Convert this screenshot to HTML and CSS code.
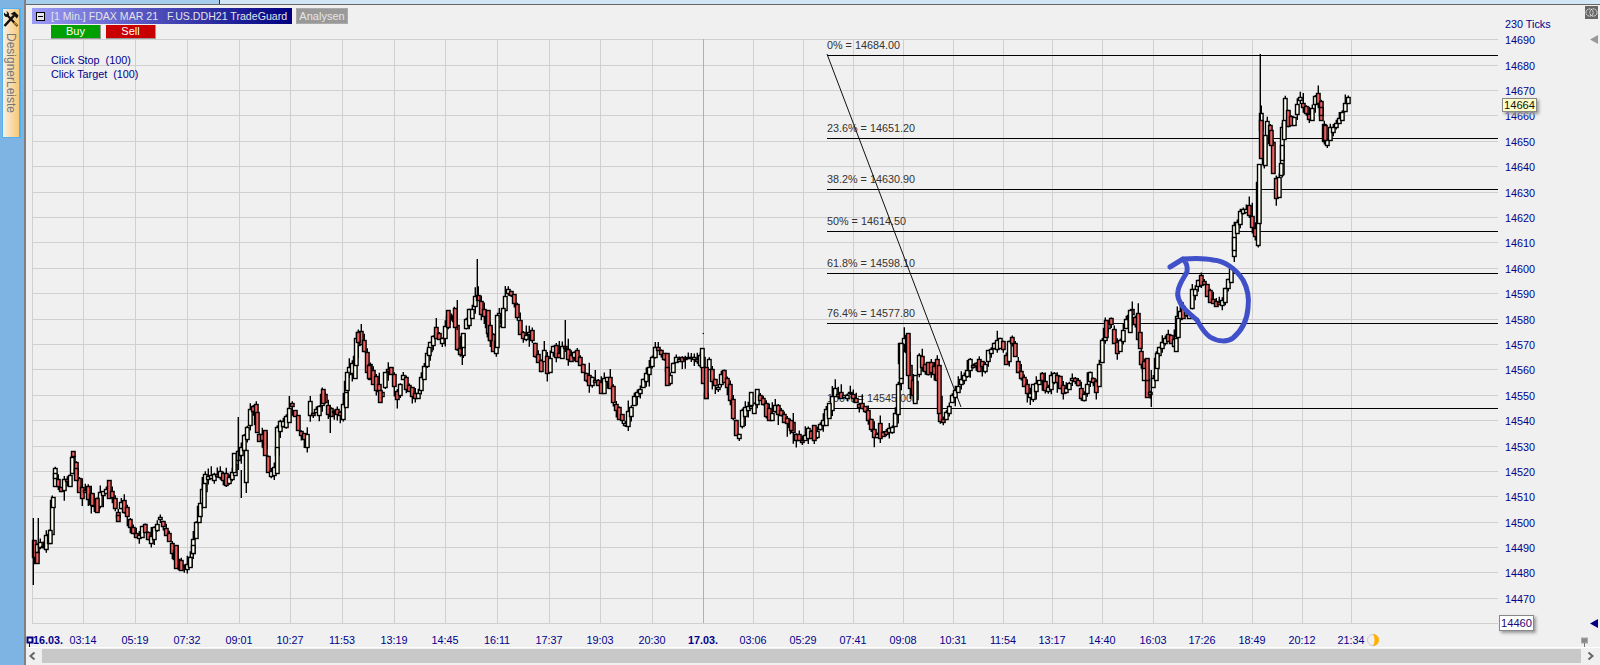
FILE: index.html
```html
<!DOCTYPE html>
<html lang="en">
<head>
    <meta charset="UTF-8">
    <title>FDAX MAR 21 - TradeGuard</title>
    <link rel="stylesheet" href="styles.css">
</head>
<body>
    <aside class="dock">
        <div class="designer-tab">
            <svg class="tools-icon" viewBox="0 0 16 16" width="16" height="16">
                <path d="M1.5 15L11 4.5" stroke="#111" stroke-width="2.6" fill="none"/>
                <path d="M7.5 3L11.5 .5L15.5 4.5L14 7.5L10.5 4Z" fill="#111"/>
                <path d="M14.5 15L5 5" stroke="#111" stroke-width="2.2" fill="none"/>
                <path d="M1 1.5L3 3.5L4.5 2L3 .5C5 .2 6.5 2 6 4.5L4.5 6C2 6.5 .5 4 1 1.5Z" fill="#111"/>
                <path d="M10.5 12L12 10.5L15 14L14 15Z" fill="#c98a2c"/>
            </svg>
            <span class="designer-label">DesignerLeiste</span>
        </div>
    </aside>

    <main class="workspace">
        <div class="top-strip"></div>

        <section class="pane">
            <svg class="chart" id="chart" viewBox="26 5 1574 642" width="1574" height="642"></svg>

            <div class="pane-head">
                <div class="title-bar">
                    <span class="collapse-box"></span>
                    <span class="title-text">[1 Min.] FDAX MAR 21   F.US.DDH21 TradeGuard</span>
                </div>
                <button class="analysis-button">Analysen</button>
            </div>
            <div class="order-row">
                <button class="order-button buy">Buy</button>
                <button class="order-button sell">Sell</button>
            </div>

            <div class="price-tag last">14664</div>
            <div class="price-tag low">14460</div>

            <svg class="rings-icon" viewBox="0 0 13 13" width="13" height="13">
                <rect width="13" height="13" fill="#666"/>
                <circle cx="4.6" cy="6.5" r="3.6" fill="none" stroke="#fff" stroke-width="1" stroke-dasharray="1.4 .6"/>
                <circle cx="8.4" cy="6.5" r="3.6" fill="none" stroke="#fff" stroke-width="1" stroke-dasharray="1.4 .6"/>
            </svg>
        </section>

        <div class="scroll-bar">
            <svg class="scroll-arrow" viewBox="0 0 16 14" width="16" height="14">
                <path d="M8.5 3.5L4.5 7L8.5 10.5" fill="none" stroke="#666" stroke-width="2"/>
            </svg>
            <span class="scroll-thumb"></span>
            <svg class="scroll-arrow" viewBox="0 0 19 14" width="19" height="14">
                <path d="M7.5 3.5L11.5 7L7.5 10.5" fill="none" stroke="#666" stroke-width="2"/>
            </svg>
        </div>
    </main>

    <script src="chart.js"></script>
</body>
</html>
```

FILE: styles.css
```css
html, body {
    margin: 0;
    padding: 0;
    width: 1600px;
    height: 665px;
    overflow: hidden;
}

body {
    display: flex;
    background: #7db4e3;
    font-family: "Liberation Sans", Arial, sans-serif;
    font-size: 11px;
}

.dock {
    width: 24px;
    flex: none;
    padding: 8px 0 0 2px;
    box-sizing: border-box;
}

.designer-tab {
    width: 19px;
    height: 130px;
    box-sizing: border-box;
    border: 1px solid #4fb0f2;
    border-right-width: 2px;
    background: linear-gradient(to right, #f6f0e8, #fac872);
    display: flex;
    flex-direction: column;
    align-items: center;
}

.tools-icon {
    margin-top: 2px;
    flex: none;
}

.designer-label {
    writing-mode: vertical-rl;
    font-size: 12px;
    color: #777;
    margin-top: 6px;
}

.workspace {
    flex: 1;
    display: flex;
    flex-direction: column;
    border-left: 2px solid #808080;
    min-width: 0;
}

.top-strip {
    height: 5px;
    box-sizing: border-box;
    flex: none;
    border-bottom: 1px solid #666;
    background: linear-gradient(to right, #a6cfee 0, #a6cfee 193px, #333 193px, #333 194px, #d2e6f6 194px);
}

.pane {
    position: relative;
    flex: 1;
    background: #f0f0f0;
    min-height: 0;
}

.chart {
    position: absolute;
    top: 0;
    left: 0;
}

.chart text {
    font-family: "Liberation Sans", Arial, sans-serif;
    font-size: 10.8px;
}

.pane-head {
    position: relative;
    display: flex;
    gap: 4px;
    padding: 3px 0 0 6px;
}

.title-bar {
    width: 260px;
    height: 16px;
    display: flex;
    align-items: center;
    background: linear-gradient(to right, #9c9cf6, #4a4ab8 50%, #000080);
    color: #e4e4e4;
    font-size: 10.6px;
}

.collapse-box {
    position: relative;
    width: 9px;
    height: 9px;
    margin: 0 6px 0 4px;
    flex: none;
    box-sizing: border-box;
    border: 1px solid #000;
    background: #e8e8e8;
}

.collapse-box::before {
    content: "";
    position: absolute;
    left: 1px;
    right: 1px;
    top: 3px;
    height: 1px;
    background: #000;
}

.title-text {
    white-space: pre;
}

.analysis-button {
    width: 52px;
    height: 16px;
    padding: 0;
    border: 1px solid #aaa;
    background: #999;
    color: #e6e6e6;
    font: 11px "Liberation Sans", Arial, sans-serif;
}

.order-row {
    position: relative;
    display: flex;
    gap: 5px;
    margin: 1px 0 0 25px;
}

.order-button {
    width: 50px;
    height: 14px;
    padding: 0;
    border: none;
    border-right: 1px solid #999;
    border-bottom: 1px solid #999;
    color: #fff;
    font: 11px/13px "Liberation Sans", Arial, sans-serif;
}

.buy {
    background: #00a000;
}

.sell {
    background: #c80000;
}

.price-tag {
    position: absolute;
    box-sizing: border-box;
    width: 35px;
    border: 1px solid #888;
    box-shadow: 2px 2px 3px #999;
    text-align: center;
    font-size: 11.2px;
    line-height: 12px;
}

.price-tag.last {
    left: 1476px;
    top: 93px;
    height: 14px;
    background: #ffffc8;
    color: #111;
}

.price-tag.low {
    left: 1473px;
    top: 610px;
    height: 16px;
    line-height: 14px;
    background: #fff;
    color: #1c0a78;
}

.rings-icon {
    position: absolute;
    top: 1px;
    left: 1559px;
}

.scroll-bar {
    height: 18px;
    flex: none;
    box-sizing: border-box;
    display: flex;
    align-items: center;
    border-top: 1px solid #fff;
    padding-bottom: 2px;
    background: #f0f0f0;
}

.scroll-arrow {
    flex: none;
}

.scroll-thumb {
    flex: 1;
    height: 14px;
    background: #c8c8c8;
}
```

FILE: chart.js
```js
const NS = 'http://www.w3.org/2000/svg';
const chart = document.getElementById('chart');

const GRID_LEFT = 32, GRID_RIGHT = 1498, GRID_TOP = 39, GRID_BOTTOM = 623;
const priceToY = p => 39.3 + (14690 - p) * 2.539;

function add(tag, attrs, text) {
    const el = document.createElementNS(NS, tag);
    for (const k in attrs) el.setAttribute(k, attrs[k]);
    if (text) el.textContent = text;
    chart.appendChild(el);
    return el;
}

// vertical grid lines and the label under each
const times = [
    [83, '03:14'], [135, '05:19'], [187, '07:32'], [239, '09:01'], [290, '10:27'], [342, '11:53'],
    [394, '13:19'], [445, '14:45'], [497, '16:11'], [549, '17:37'], [600, '19:03'], [652, '20:30'],
    [703, '17.03.'], [753, '03:06'], [803, '05:29'], [853, '07:41'], [903, '09:08'], [953, '10:31'],
    [1003, '11:54'], [1052, '13:17'], [1102, '14:40'], [1153, '16:03'], [1202, '17:26'], [1252, '18:49'],
    [1302, '20:12'], [1351, '21:34']
];

function line(x1, y1, x2, y2, color) {
    add('line', { x1, y1, x2, y2, stroke: color, 'stroke-width': 1, 'shape-rendering': 'crispEdges' });
}

function drawGrid() {
    for (let p = 14690; p >= 14460; p -= 10) {
        const y = Math.round(priceToY(p)) + 0.5;
        line(GRID_LEFT, y, GRID_RIGHT, y, '#d0d0d0');
        // the lowest price sits in its own tag
        if (p > 14460) add('text', { x: 1505, y: y + 4, fill: '#00008b' }, String(p));
    }
    line(GRID_LEFT + 0.5, GRID_TOP, GRID_LEFT + 0.5, GRID_BOTTOM, '#d0d0d0');
    times.forEach(([x, label]) => {
        const day = label.endsWith('.');
        line(x + 0.5, GRID_TOP, x + 0.5, GRID_BOTTOM, day ? '#b0b0b0' : '#d0d0d0');
        const t = add('text', { x, y: 644, fill: '#00008b', 'text-anchor': 'middle' }, label);
        if (day) t.setAttribute('font-weight', 'bold');
    });
    add('text', { x: 33, y: 644, fill: '#00008b', 'font-weight': 'bold' }, '16.03.');
    add('text', { x: 1505, y: 28, fill: '#00008b' }, '230 Ticks');
    add('text', { x: 51, y: 64, fill: '#00008b' }, 'Click Stop \u00a0(100)');
    add('text', { x: 51, y: 78, fill: '#00008b' }, 'Click Target \u00a0(100)');
}

// fibonacci retracement drawn by the user
function drawFib() {
    const levels = [
        ['0% = 14684.00', 14684], ['23.6% = 14651.20', 14651.2], ['38.2% = 14630.90', 14630.9],
        ['50% = 14614.50', 14614.5], ['61.8% = 14598.10', 14598.1], ['76.4% = 14577.80', 14578.1],
        ['100% = 14545.00', 14544.6]
    ];
    levels.forEach(([label, price]) => {
        const y = Math.round(priceToY(price)) + 0.5;
        line(827, y, GRID_RIGHT, y, '#000');
        add('text', { x: 827, y: y - 6.5, fill: '#333' }, label);
    });
    add('line', { x1: 827, y1: 54, x2: 961, y2: 407, stroke: '#111', 'stroke-width': 1 });
}

// price path read off the chart, x then y in page pixels
const path = [
    [33,540],[35,555],[38,545],[45,545],[50,537],[53,505],[55,477],[62,493],[65,480],[70,480],[73,458],[77,473],
    [80,490],[87,493],[92,500],[97,508],[102,493],[108,488],[113,497],[118,513],[122,502],[127,513],[132,527],
    [137,537],[145,528],[150,540],[155,530],[160,520],[165,528],[170,540],[176,560],[180,567],[185,568],[190,560],
    [195,537],[200,510],[205,482],[210,477],[220,475],[228,480],[233,475],[238,457],[242,447],[247,433],[252,407],
    [256,413],[258,437],[265,440],[267,460],[270,473],[275,470],[277,443],[280,427],[285,422],[292,407],[297,417],
    [299,430],[307,440],[310,410],[315,413],[320,407],[324,393],[329,412],[335,410],[342,417],[346,393],[348,373],
    [355,367],[357,340],[360,333],[365,347],[368,370],[377,383],[382,395],[387,370],[392,373],[398,397],[403,378],
    [413,392],[418,397],[423,375],[429,350],[435,333],[443,340],[448,320],[455,317],[458,345],[462,353],[465,327],
    [472,313],[476,296],[480,303],[487,320],[492,342],[497,347],[498,318],[502,320],[504,307],[508,290],[513,297],
    [517,310],[521,330],[525,338],[530,330],[533,340],[537,357],[542,368],[545,350],[548,373],[553,350],[560,355],
    [565,347],[572,360],[575,353],[582,365],[586,377],[590,383],[595,380],[602,390],[608,377],[612,390],[615,407],
    [620,413],[625,423],[630,413],[635,397],[642,387],[647,373],[652,363],[656,347],[662,353],[667,363],[669,383],
    [673,367],[678,358],[685,357],[690,358],[697,360],[702,357],[704,380],[706,395],[709,363],[713,380],[718,390],
    [723,373],[727,382],[732,400],[736,427],[739,437],[743,413],[750,405],[755,408],[758,393],[763,402],[768,413],
    [771,420],[775,407],[783,417],[792,427],[797,437],[802,442],[808,433],[815,437],[820,427],[829,413],[835,393],
    [843,397],[850,393],[858,403],[865,407],[870,420],[875,437],[880,432],[887,435],[893,427],[897,410],[900,377],
    [903,343],[907,343],[910,377],[915,397],[920,357],[925,367],[930,367],[937,370],[940,410],[943,420],[948,410],
    [952,400],[958,387],[965,375],[970,365],[978,363],[985,368],[990,350],[997,343],[1003,343],[1007,363],[1011,337],
    [1015,352],[1018,367],[1024,380],[1029,395],[1035,388],[1042,378],[1047,390],[1053,378],[1058,380],[1065,393],
    [1072,380],[1078,382],[1083,398],[1090,378],[1097,388],[1100,367],[1103,343],[1107,327],[1111,323],[1115,343],
    [1118,352],[1123,333],[1127,320],[1132,313],[1138,327],[1140,357],[1145,367],[1147,387],[1150,392],[1155,377],
    [1158,353],[1167,338],[1175,343],[1178,320],[1182,310],[1190,318],[1192,297],[1200,280],[1205,283],[1208,293],
    [1215,302],[1223,305],[1227,287],[1232,273],[1234,240],[1237,228],[1242,212],[1248,207],[1253,227],[1257,237],
    [1259,190],[1261,123],[1263,167],[1265,147],[1268,123],[1272,147],[1275,180],[1277,197],[1280,183],[1282,150],
    [1284,120],[1286,100],[1288,117],[1293,123],[1297,110],[1300,100],[1305,107],[1310,120],[1315,100],[1318,97],
    [1321,112],[1323,127],[1326,143],[1330,133],[1335,125],[1342,117],[1347,103],[1350,100]
];

function pathY(x) {
    for (let i = 1; i < path.length; i++) {
        if (x <= path[i][0]) {
            const [x0, y0] = path[i - 1], [x1, y1] = path[i];
            return y0 + (y1 - y0) * (x - x0) / (x1 - x0);
        }
    }
    return path[path.length - 1][1];
}

// small seeded generator so the picture is the same every time
let seed = 20210316;
function rnd() {
    seed = (seed * 1664525 + 1013904223) % 4294967296;
    return seed / 4294967296;
}

function candle(x, top, bottom, up) {
    add('rect', {
        x: Math.round(x) - 1.5, y: Math.round(top) + 0.5, width: 3.6, height: Math.max(1, Math.round(bottom - top)),
        fill: up ? '#fffff0' : '#f25f5f', stroke: '#000', 'stroke-width': 1.4
    });
}

function wick(x, y1, y2) {
    add('line', { x1: Math.round(x) + 0.3, y1, x2: Math.round(x) + 0.3, y2, stroke: '#000', 'stroke-width': 1.4 });
}

// bars that stand out in the chart: x, top, bottom, up
const bigBars = [
    [37,552,563,0],[50,530,543,1],[53,497,507,1],[55,473,478,1],[72,457,473,1],[73,451,456,0],[76,468,480,0],
    [92,493,505,0],[97,498,512,0],[118,515,521,0],[176,545,568,0],[181,560,570,0],[190,557,567,1],[193,545,553,1],
    [200,503,516,1],[204,483,507,1],[234,453,472,1],[246,450,482,1],[257,412,432,0],[265,430,455,0],[277,447,473,1],
    [323,389,403,0],[346,392,407,1],[347,372,390,1],[356,338,365,1],[358,332,342,0],[369,365,378,0],[380,390,402,0],
    [429,347,355,1],[448,310,327,0],[455,308,327,0],[463,333,347,1],[488,310,333,0],[490,325,340,0],[497,315,347,1],
    [503,308,327,1],[667,367,385,0],[702,348,367,1],[706,367,398,0],[751,392,405,1],[791,420,430,0],[814,425,440,0],
    [829,403,418,1],[900,343,363,0],[901,343,378,1],[908,333,375,0],[915,375,403,1],[939,365,413,0],[1106,320,337,0],
    [1130,310,332,1],[1140,332,348,0],[1144,368,380,1],[1147,358,380,0],[1157,353,368,1],[1176,338,351,1],[1178,318,337,1],
    [1234,237,250,1],[1259,164,223,1],[1261,120,158,0],[1265,135,165,1],[1271,130,145,0],[1281,163,175,1],[1282,145,160,1],
    [1284,120,139,1],[1321,107,115,0],[1325,125,140,0]
];

const bigWicks = [
    [33,518,585],[38,518,555],[238,417,470],[241,470,498],[246,470,493],[330,405,433],[457,300,330],[462,340,365],
    [476.5,259,300],[565,320,352],[703,333,334],[1151,370,407],[1260,54,125]
];

function drawCandles() {
    for (let x = 34; x <= 1350; x += 3) {
        const slope = pathY(x + 1.5) - pathY(x - 1.5);
        const mid = pathY(x) + (rnd() - 0.5) * 4;
        const height = Math.max(Math.abs(slope), 1 + rnd() * rnd() * 18);
        const up = Math.abs(slope) > 1 ? slope < 0 : rnd() < 0.5;
        wick(x, mid - height / 2 - rnd() * rnd() * 14, mid + height / 2 + rnd() * rnd() * 14);
        candle(x, mid - height / 2, mid + height / 2, up);
    }
    bigWicks.forEach(([x, y1, y2]) => wick(x, y1, y2));
    bigBars.forEach(([x, top, bottom, up]) => candle(x, top, bottom, up));
}

function drawInk() {
    add('path', {
        d: 'M1170 267L1183 259C1195 258 1205 258 1213 260C1225 261 1236 269 1243 280C1248 289 1249 300 1248 308' +
           'C1247 322 1240 332 1233 338C1228 342 1218 342 1210 337C1203 332 1200 325 1197 320C1191 315 1186 311 1183 307' +
           'C1178 300 1177 295 1178 291C1179 284 1183 279 1187 272C1188 266 1186 262 1183 259',
        fill: 'none', stroke: '#4050c8', 'stroke-width': 5, 'stroke-linecap': 'round', 'stroke-linejoin': 'round'
    });
}

// small markers round the edges of the chart
function drawMarkers() {
    add('path', { d: 'M1590 39.5L1598 35V44Z', fill: '#999' });
    add('path', { d: 'M1590 623.5L1598 619V628Z', fill: '#000080' });
    add('rect', { x: 27.5, y: 637.5, width: 5, height: 5, fill: '#fff', stroke: '#000080', 'stroke-width': 2 });
    line(29.5, 643, 29.5, 648, '#000080');
    add('rect', { x: 1581.5, y: 638, width: 6, height: 5, fill: '#888', stroke: '#aaa', 'stroke-width': 1 });
    line(1584.5, 643, 1584.5, 647, '#777');
    add('circle', { cx: 1373, cy: 640, r: 5.5, fill: '#f0f0f0', stroke: '#ccc', 'stroke-width': 1 });
    add('path', { d: 'M1373 634A6 6 0 0 1 1373 646C1375 642 1375 638 1373 634Z', fill: '#ffb000' });
}

drawGrid();
drawFib();
drawCandles();
drawInk();
drawMarkers();
```
